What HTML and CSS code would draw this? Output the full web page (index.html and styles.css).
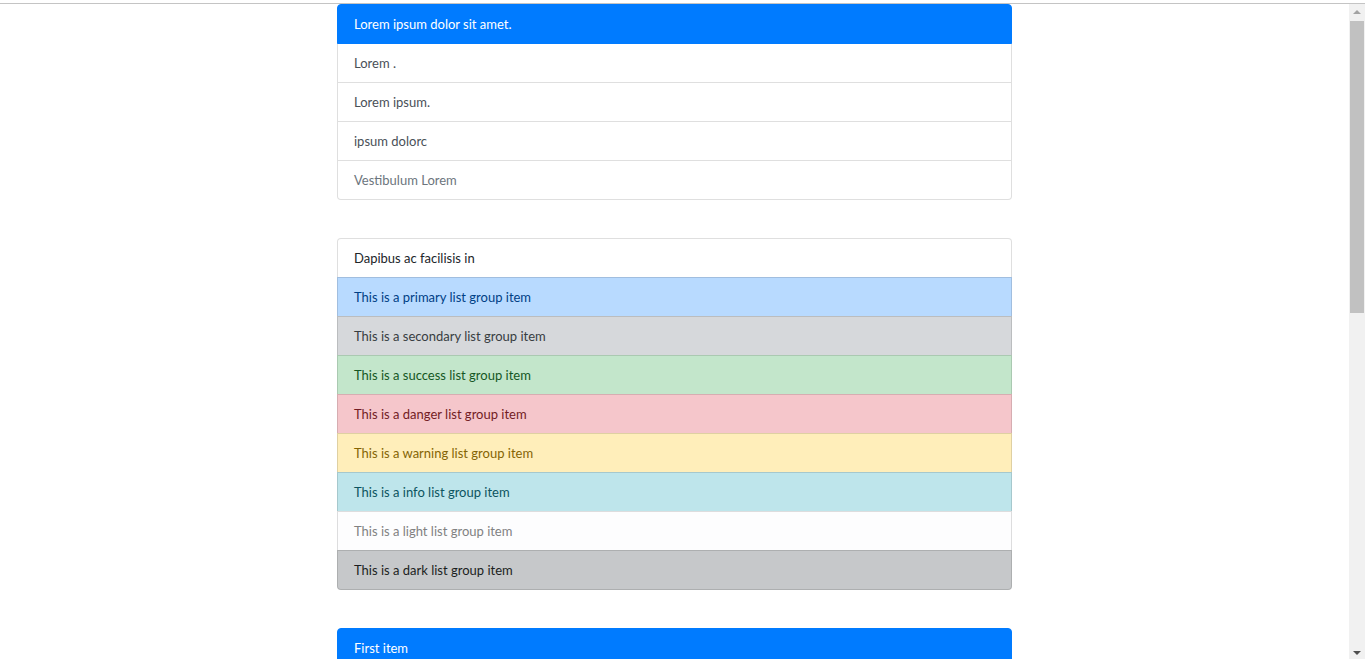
FILE: index.html
```html
<!DOCTYPE html>
<html lang="en">
<head>
<meta charset="utf-8">
<title>List groups</title>
<link rel="stylesheet" href="styles.css">
</head>
<body>
<div class="topline"></div>
<main class="wrap">
  <ul class="list-group">
    <li class="item active">Lorem ipsum dolor sit amet.</li>
    <li class="item action">Lorem .</li>
    <li class="item action">Lorem ipsum.</li>
    <li class="item action">ipsum dolorc</li>
    <li class="item disabled">Vestibulum Lorem</li>
  </ul>
  <ul class="list-group">
    <li class="item">Dapibus ac facilisis in</li>
    <li class="item primary">This is a primary list group item</li>
    <li class="item secondary">This is a secondary list group item</li>
    <li class="item success">This is a success list group item</li>
    <li class="item danger">This is a danger list group item</li>
    <li class="item warning">This is a warning list group item</li>
    <li class="item info">This is a info list group item</li>
    <li class="item light">This is a light list group item</li>
    <li class="item dark">This is a dark list group item</li>
  </ul>
  <ul class="list-group">
    <li class="item active">First item</li>
    <li class="item action">Second item</li>
    <li class="item action">Third item</li>
  </ul>
</main>
<div class="scrollbar" aria-hidden="true">
  <span class="arrow up"></span>
  <span class="thumb"></span>
  <span class="arrow down"></span>
</div>
</body>
</html>
```
FILE: styles.css
```css
html, body {
  margin: 0;
  padding: 0;
  background: #fff;
}
body {
  font-family: "Lato", "Open Sans", sans-serif;
  font-size: 13px;
  color: #212529;
  padding-right: 16px;
}
.topline {
  box-sizing: border-box;
  height: 4px;
  border-bottom: 1px solid #c4c4c4;
  margin-right: -16px;
}
.wrap {
  width: 675px;
  margin: 0 auto;
  display: flex;
  flex-direction: column;
  gap: 38px;
}
.list-group {
  list-style: none;
  margin: 0;
  padding: 0;
  display: flex;
  flex-direction: column;
}
.item {
  position: relative;
  padding: 8px 16px;
  line-height: 22px;
  border: 1px solid rgba(0, 0, 0, 0.125);
  margin-bottom: -1px;
  background: #fff;
  color: #212529;
}
.item:first-child {
  border-top-left-radius: 4px;
  border-top-right-radius: 4px;
}
.item:last-child {
  border-bottom-left-radius: 4px;
  border-bottom-right-radius: 4px;
  margin-bottom: 0;
}
.item.active {
  z-index: 2;
  background: #007bff;
  border-color: #007bff;
  color: #fff;
}
.item.action { color: #495057; }
.item.disabled { color: #6c757d; }
.primary { background: #b8daff; color: #004085; }
.secondary { background: #d6d8db; color: #383d41; }
.success { background: #c3e6cb; color: #155724; }
.danger { background: #f5c6cb; color: #721c24; }
.warning { background: #ffeeba; color: #856404; }
.info { background: #bee5eb; color: #0c5460; }
.light { background: #fdfdfe; color: #818182; }
.dark { background: #c6c8ca; color: #1b1e21; }

.scrollbar {
  position: fixed;
  top: 4px;
  right: 0;
  bottom: 0;
  width: 16px;
  background: #f1f1f1;
  display: flex;
  flex-direction: column;
  align-items: center;
  z-index: 10;
}
.arrow {
  width: 0;
  height: 0;
  border-left: 4px solid transparent;
  border-right: 4px solid transparent;
  margin: 6px 0;
}
.arrow.up {
  border-bottom: 4px solid #a3a3a3;
}
.arrow.down {
  border-top: 4px solid #505050;
  margin-top: auto;
  margin-bottom: 4px;
}
.thumb {
  width: 14px;
  height: 292px;
  background: #c1c1c1;
  margin-top: 1px;
}
```
